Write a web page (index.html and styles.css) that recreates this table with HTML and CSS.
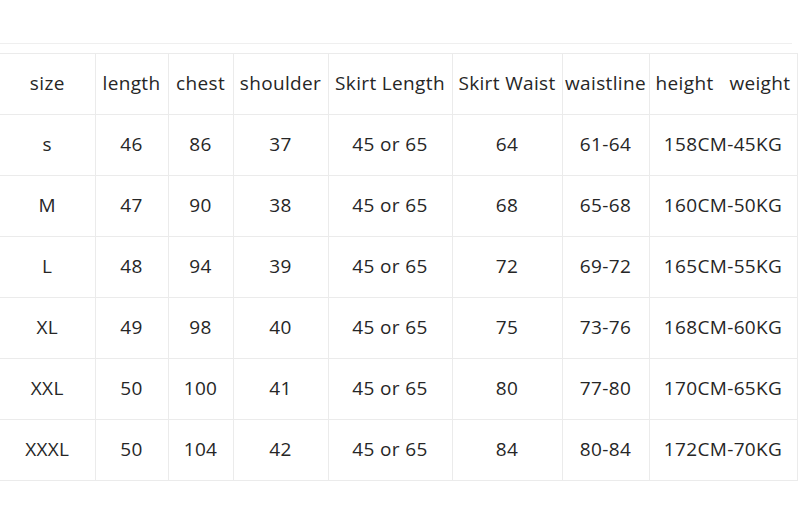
FILE: index.html
```html
<!DOCTYPE html>
<html>
<head>
<meta charset="utf-8">
<link rel="stylesheet" href="styles.css">
</head>
<body>
<div class="page">
  <div class="topline"></div>
  <table class="chart">
    <colgroup>
      <col class="c1"><col class="c2"><col class="c3"><col class="c4"><col class="c5"><col class="c6"><col class="c7"><col class="c8">
    </colgroup>
    <tr><td>size</td><td>length</td><td>chest</td><td>shoulder</td><td>Skirt Length</td><td>Skirt Waist</td><td>waistline</td><td>height&nbsp;&nbsp; weight</td></tr>
    <tr><td>s</td><td>46</td><td>86</td><td>37</td><td>45 or 65</td><td>64</td><td>61-64</td><td>158CM-45KG</td></tr>
    <tr><td>M</td><td>47</td><td>90</td><td>38</td><td>45 or 65</td><td>68</td><td>65-68</td><td>160CM-50KG</td></tr>
    <tr><td>L</td><td>48</td><td>94</td><td>39</td><td>45 or 65</td><td>72</td><td>69-72</td><td>165CM-55KG</td></tr>
    <tr><td>XL</td><td>49</td><td>98</td><td>40</td><td>45 or 65</td><td>75</td><td>73-76</td><td>168CM-60KG</td></tr>
    <tr><td>XXL</td><td>50</td><td>100</td><td>41</td><td>45 or 65</td><td>80</td><td>77-80</td><td>170CM-65KG</td></tr>
    <tr><td>XXXL</td><td>50</td><td>104</td><td>42</td><td>45 or 65</td><td>84</td><td>80-84</td><td>172CM-70KG</td></tr>
  </table>
</div>
</body>
</html>
```
FILE: styles.css
```css
html, body {
  margin: 0;
  padding: 0;
  background: #ffffff;
}
.page {
  width: 800px;
  height: 525px;
  padding-top: 43px;
  box-sizing: border-box;
  font-family: "Open Sans", "Liberation Sans", sans-serif;
  color: #262626;
}
.topline {
  width: 792px;
  height: 0;
  border-top: 1px solid #efefef;
  margin-bottom: 9px;
}
.chart {
  border-collapse: collapse;
  table-layout: fixed;
  width: 797px;
}
.c1 { width: 95px; }
.c2 { width: 73px; }
.c3 { width: 65px; }
.c4 { width: 95px; }
.c5 { width: 124px; }
.c6 { width: 110px; }
.c7 { width: 87px; }
.c8 { width: 148px; }
.chart td {
  height: 58px;
  padding: 0 0 2px 0;
  text-align: center;
  vertical-align: middle;
  font-size: 19px;
  letter-spacing: 0.35px;
  white-space: nowrap;
  border: 1px solid #ebebeb;
}
.chart tr td:first-child { border-left: none; }
```
